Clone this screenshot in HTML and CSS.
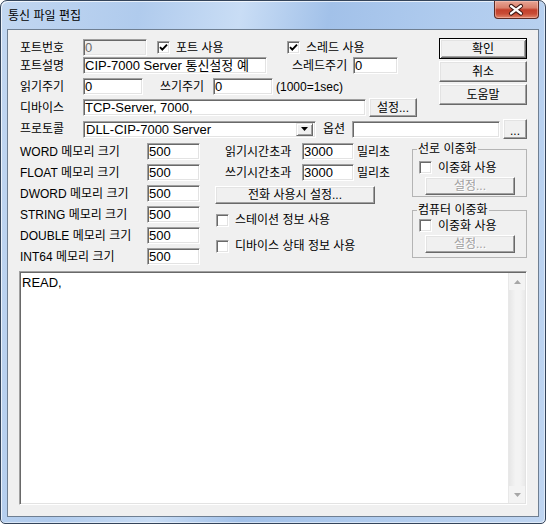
FILE: index.html
```html
<!DOCTYPE html>
<html lang="ko">
<head>
<meta charset="utf-8">
<title>통신 파일 편집</title>
<link rel="stylesheet" href="styles.css">
</head>
<body>
<div class="window">
  <div class="titlebar">
    <span class="title">통신 파일 편집</span>
    <div class="close">
      <svg width="45" height="18" viewBox="0 0 45 18">
        <path d="M17.5 5 L27.5 12.5 M27.5 5 L17.5 12.5" stroke="#3e1814" stroke-width="4.4" stroke-linecap="round" fill="none"/>
        <path d="M17.5 5 L27.5 12.5 M27.5 5 L17.5 12.5" stroke="#ffffff" stroke-width="2.4" stroke-linecap="round" fill="none"/>
      </svg>
    </div>
  </div>
  <div class="client">
    <div class="top">
      <div class="fields">
        <div class="row r1">
          <span class="lbl lw">포트번호</span>
          <span class="edit disabled w64">0</span>
          <span class="chk c1"><span class="cb"><svg width="11" height="11" viewBox="0 0 11 11"><path d="M2 5.2 L4.3 7.6 L9 2.6" stroke="#000" stroke-width="1.9" fill="none"/></svg></span>포트 사용</span>
          <span class="chk"><span class="cb"><svg width="11" height="11" viewBox="0 0 11 11"><path d="M2 5.2 L4.3 7.6 L9 2.6" stroke="#000" stroke-width="1.9" fill="none"/></svg></span>스레드 사용</span>
        </div>
        <div class="row r2">
          <span class="lbl lw">포트설명</span>
          <span class="edit w184">CIP-7000 Server 통신설정 예</span>
          <span class="lbl thr">스레드주기</span>
          <span class="edit w45">0</span>
        </div>
        <div class="row r3">
          <span class="lbl lw">읽기주기</span>
          <span class="edit w60">0</span>
          <span class="lbl wr">쓰기주기</span>
          <span class="edit w60">0</span>
          <span class="lbl unit">(1000=1sec)</span>
        </div>
        <div class="row r4">
          <span class="lbl lw">디바이스</span>
          <span class="edit w283">TCP-Server, 7000,</span>
          <span class="btn setdev">설정...</span>
        </div>
      </div>
      <div class="btns">
        <span class="btn default">확인</span>
        <span class="btn">취소</span>
        <span class="btn">도움말</span>
      </div>
    </div>
    <div class="row r5">
      <span class="lbl lw">프로토콜</span>
      <span class="edit combo">
        <span class="combo-text">DLL-CIP-7000 Server</span>
        <span class="drop"><svg width="7" height="4" viewBox="0 0 7 4"><polygon points="0,0 7,0 3.5,4" fill="#000"/></svg></span>
      </span>
      <span class="lbl opt">옵션</span>
      <span class="edit w148"></span>
      <span class="btn dots">...</span>
    </div>
    <div class="middle">
      <div class="mem">
        <div class="memrow"><span class="lbl memlbl">WORD 메모리 크기</span><span class="edit w53">500</span></div>
        <div class="memrow"><span class="lbl memlbl">FLOAT 메모리 크기</span><span class="edit w53">500</span></div>
        <div class="memrow"><span class="lbl memlbl">DWORD 메모리 크기</span><span class="edit w53">500</span></div>
        <div class="memrow"><span class="lbl memlbl">STRING 메모리 크기</span><span class="edit w53">500</span></div>
        <div class="memrow"><span class="lbl memlbl">DOUBLE 메모리 크기</span><span class="edit w53">500</span></div>
        <div class="memrow"><span class="lbl memlbl">INT64 메모리 크기</span><span class="edit w53">500</span></div>
      </div>
      <div class="mid">
        <div class="midrow"><span class="lbl tol">읽기시간초과</span><span class="edit w52">3000</span><span class="lbl ms">밀리초</span></div>
        <div class="midrow"><span class="lbl tol">쓰기시간초과</span><span class="edit w52">3000</span><span class="lbl ms">밀리초</span></div>
        <span class="btn phone">전화 사용시 설정...</span>
        <div class="chk midchk"><span class="cb"></span>스테이션 정보 사용</div>
        <div class="chk midchk"><span class="cb"></span>디바이스 상태 정보 사용</div>
      </div>
      <div class="groups">
        <fieldset class="group g1">
          <legend>선로 이중화</legend>
          <div class="chk gchk"><span class="cb"></span>이중화 사용</div>
          <span class="btn disabled gbtn">설정...</span>
        </fieldset>
        <fieldset class="group g2">
          <legend>컴퓨터 이중화</legend>
          <div class="chk gchk"><span class="cb"></span>이중화 사용</div>
          <span class="btn disabled gbtn">설정...</span>
        </fieldset>
      </div>
    </div>
    <div class="memo">
      <div class="memo-text">READ,</div>
      <div class="scroll">
        <span class="arrow"><svg width="7" height="4" viewBox="0 0 7 4"><polygon points="0,4 7,4 3.5,0" fill="#a6a6a6"/></svg></span>
        <span class="track"></span>
        <span class="arrow"><svg width="7" height="4" viewBox="0 0 7 4"><polygon points="0,0 7,0 3.5,4" fill="#a6a6a6"/></svg></span>
      </div>
    </div>
  </div>
</div>
</body>
</html>
```

FILE: styles.css
```css
* { box-sizing: border-box; }
html, body { margin: 0; padding: 0; }
body {
  width: 546px;
  height: 524px;
  overflow: hidden;
  background: #ffffff;
  font-family: "Liberation Sans", "Noto Sans CJK KR", sans-serif;
  font-size: 12px;
  color: #000;
}
.window {
  width: 546px;
  height: 524px;
  border: 1px solid #34445a;
  border-radius: 7px 7px 5px 5px;
  background: linear-gradient(100deg, #c2d7f1 0%, #b0cbed 22%, #c9ddf5 38%, #a2c1e9 52%, #afcbee 70%, #bfd5f1 100%);
  box-shadow: inset 1px 1px rgba(255,255,255,0.7), inset -1px -1px rgba(255,255,255,0.5);
  display: flex;
  flex-direction: column;
  overflow: hidden;
}
.titlebar {
  height: 28px;
  display: flex;
  align-items: flex-start;
  flex: none;
}
.title {
  margin-left: 7px;
  margin-top: 6px;
  line-height: 16px;
  font-size: 12px;
  font-family: "Noto Sans CJK KR", sans-serif;
  color: #000;
}
.close {
  margin-left: auto;
  margin-right: 6px;
  width: 45px;
  height: 18px;
  border: 1px solid #5a2a24;
  border-top: none;
  border-radius: 0 0 4px 4px;
  background: linear-gradient(#e7a595 0%, #d9806c 40%, #c3402c 52%, #c84c36 75%, #e1866b 100%);
  box-shadow: inset 0 0 0 1px rgba(255,210,200,0.45);
  display: flex;
}
.close svg { display: block; margin-left: -1px; }
.client {
  margin: 0 6px;
  height: 488px;
  border: 1px solid #6f7f92;
  background: #f0f0f0;
  padding: 8px 11px 0 12px;
  flex: none;
}
.top { display: flex; align-items: flex-start; }
.fields { flex: 1; margin-top: 1px; }
.row { display: flex; align-items: center; }
.r1 { height: 17px; }
.r2 { height: 17px; margin-top: 1px; }
.r3 { height: 17px; margin-top: 4px; }
.r4 { height: 19px; margin-top: 3px; }
.r5 { height: 20px; margin-top: 2px; }
.lbl { white-space: nowrap; line-height: 14px; flex: none; }
.lw { width: 63px; }
.thr { margin-left: 25px; width: 61px; }
.wr { margin-left: 17px; width: 53px; }
.unit { margin-left: 3px; }
.opt { margin-left: 7px; width: 29px; }

.edit {
  height: 17px;
  border: 1px solid;
  border-color: #a0a0a0 #ffffff #ffffff #a0a0a0;
  box-shadow: inset 1px 1px #696969, inset -1px -1px #e3e3e3;
  background: #ffffff;
  font-size: 13px;
  line-height: 14px;
  padding: 1px 0 0 1px;
  white-space: nowrap;
  overflow: hidden;
  display: flex;
  align-items: center;
  flex: none;
}
.edit.disabled { background: #f0f0f0; color: #6d6d6d; }
.w45 { width: 45px; }
.w52 { width: 52px; }
.w53 { width: 53px; }
.w60 { width: 60px; }
.w64 { width: 64px; }
.w148 { width: 148px; }
.w184 { width: 184px; }
.w283 { width: 283px; }

.btn {
  height: 21px;
  border: 1px solid;
  border-color: #ffffff #696969 #696969 #ffffff;
  box-shadow: inset -1px -1px #a0a0a0, inset 1px 1px #e3e3e3;
  background: #f0f0f0;
  display: flex;
  align-items: center;
  justify-content: center;
  font-size: 12px;
  line-height: 14px;
  white-space: nowrap;
  flex: none;
}
.btn.default {
  border-color: #000;
  box-shadow: inset 1px 1px #fff, inset -1px -1px #696969, inset 2px 2px #e3e3e3, inset -2px -2px #a0a0a0;
}
.btn.disabled { color: #a0a0a0; text-shadow: 1px 1px #ffffff; }
.btns {
  width: 88px;
  margin-left: auto;
  display: flex;
  flex-direction: column;
  gap: 2px;
  flex: none;
}
.setdev { width: 48px; height: 19px; margin-left: 3px; }
.dots { width: 24px; height: 20px; margin-left: 3px; padding-top: 4px; }

.combo { width: 233px; padding: 0; }
.combo-text { flex: 1; padding-left: 2px; padding-top: 1px; }
.drop {
  width: 17px;
  height: 13px;
  margin-right: 2px;
  border: 1px solid;
  border-color: #e3e3e3 #696969 #696969 #e3e3e3;
  box-shadow: inset 1px 1px #fff, inset -1px -1px #a0a0a0;
  background: #f0f0f0;
  display: flex;
  align-items: center;
  justify-content: center;
}
.drop svg { display: block; }

.chk { display: flex; align-items: center; white-space: nowrap; line-height: 14px; flex: none; }
.cb {
  width: 13px;
  height: 13px;
  border: 1px solid;
  border-color: #a0a0a0 #ffffff #ffffff #a0a0a0;
  box-shadow: inset 1px 1px #696969, inset -1px -1px #e3e3e3;
  background: #ffffff;
  margin-right: 6px;
  flex: none;
  display: flex;
}
.cb svg { display: block; }
.c1 { margin-left: 10px; width: 130px; }

.middle { display: flex; align-items: flex-start; margin-top: 2px; }
.mem { width: 180px; flex: none; }
.memrow { height: 21px; display: flex; align-items: center; }
.memlbl { width: 127px; }
.mid { width: 180px; margin-left: 15px; flex: none; }
.midrow { height: 21px; display: flex; align-items: center; }
.tol { margin-left: 10px; width: 77px; }
.ms { margin-left: 3px; }
.phone { width: 160px; height: 18px; margin-top: 3px; }
.midchk { height: 20px; margin-top: 6px; margin-left: 1px; }

.groups { width: 115px; margin-left: auto; flex: none; }
.group {
  margin: 0;
  padding: 0 0 1px 6px;
  border: 1px solid #b4b4b4;
  min-width: 0;
}
.group legend {
  padding: 0 1px;
  margin-left: -2px;
  line-height: 16px;
  font-size: 12px;
}
.gchk { height: 15px; }
.g1 .gchk { margin-top: 3px; }
.g2 { margin-top: 5px; padding-bottom: 4px; }
.gbtn { width: 90px; height: 18px; margin-top: 2px; margin-left: 6px; }

.memo {
  margin-top: 4px;
  margin-left: -1px;
  width: 508px;
  height: 234px;
  border: 1px solid;
  border-color: #a0a0a0 #ffffff #ffffff #a0a0a0;
  box-shadow: inset 1px 1px #696969, inset -1px -1px #e3e3e3;
  background: #ffffff;
  display: flex;
  padding: 1px;
}
.memo-text {
  flex: 1;
  font-size: 13px;
  line-height: 14px;
  padding: 3px 0 0 1px;
}
.scroll {
  width: 17px;
  display: flex;
  flex-direction: column;
  background: linear-gradient(90deg, #e6e6e6, #f3f3f3 40%, #f3f3f3 70%, #e9e9e9);
  border-left: 1px solid #e8e8e8;
}
.arrow {
  height: 17px;
  display: flex;
  align-items: center;
  justify-content: center;
  background: #f3f3f3;
}
.arrow svg { display: block; }
.track { flex: 1; }
```
